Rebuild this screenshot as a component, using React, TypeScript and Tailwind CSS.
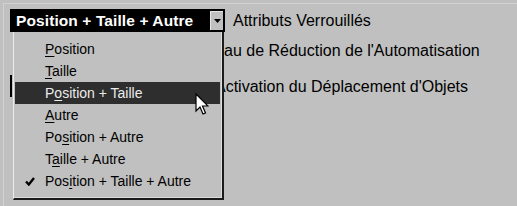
import React from 'react';

type Item = { pre: string; key: string; post: string; checked?: boolean; active?: boolean };

const items: Item[] = [
    { pre: '', key: 'P', post: 'osition' },
    { pre: '', key: 'T', post: 'aille' },
    { pre: 'P', key: 'o', post: 'sition + Taille', active: true },
    { pre: '', key: 'A', post: 'utre' },
    { pre: 'Po', key: 's', post: 'ition + Autre' },
    { pre: 'T', key: 'a', post: 'ille + Autre' },
    { pre: 'Pos', key: 'i', post: 'tion + Taille + Autre', checked: true },
];

function CheckMark() {
    return (
        <svg width="10" height="9" viewBox="0 0 10 9" className="absolute left-[10px] top-[7px]">
            <path d="M1 4.5 L3.8 7.5 L9 1" fill="none" stroke="#000" strokeWidth="2.4" />
        </svg>
    );
}

function Cursor() {
    return (
        <svg width="14" height="23" viewBox="0 0 14 23" className="absolute left-[195px] top-[93px]">
            <path
                d="M1 1 L1 18 L5 14 L8 21 L10.5 20 L7.5 13 L13 13 Z"
                fill="#fff"
                stroke="#000"
                strokeWidth="1.2"
                strokeLinejoin="miter"
            />
        </svg>
    );
}

export default function App() {
    return (
        <div className="relative w-[517px] h-[206px] overflow-hidden bg-[#c0c0c0] pt-[3px] pl-[3px] font-['Liberation_Sans',Arial,sans-serif]">
            <div className="h-full border-t border-l border-[#d2d2d2] pt-[5px] pl-[6px]">
                {/* combo row */}
                <div className="flex items-center h-[23px]">
                    <div className="flex items-center w-[215px] h-[23px] bg-black">
                        <span className="pl-[6px] text-[15.5px] font-bold text-white leading-none tracking-[0.1px]">
                            Position + Taille + Autre
                        </span>
                        <div className="ml-auto mr-[2px] w-[13px] h-[19px] bg-[#c0c0c0] border-t border-l border-[#e6e6e6] flex items-center justify-center">
                            <svg width="7" height="4" viewBox="0 0 7 4">
                                <path d="M0 0 L7 0 L3.5 4 Z" fill="#000" />
                            </svg>
                        </div>
                    </div>
                    <span className="ml-[8px] text-[16px] text-black leading-none">Attributs Verrouillés</span>
                </div>

                <div className="mt-[9px] h-[20px] leading-[20px] pl-[182px] text-[16px] text-black whitespace-nowrap">
                    Niveau de Réduction de l'Automatisation
                </div>

                <div className="mt-[14px] flex items-center h-[22px]">
                    <div className="w-[2px] h-[22px] bg-black" />
                    <span className="ml-[203px] mt-[1px] text-[16px] text-black leading-none whitespace-nowrap">
                        Activation du Déplacement d'Objets
                    </span>
                </div>
            </div>

            {/* open dropdown list */}
            <div className="absolute left-[13px] top-[32px] w-[211px] h-[168px] bg-[#c0c0c0] border-l border-[#ececec] border-r-2 border-b-2 border-r-[#1c1c1c] border-b-[#1c1c1c] shadow-[inset_-1px_-1px_0_#dcdcdc] pt-[6px]">
                {items.map((it, i) => (
                    <div
                        key={i}
                        className={`relative ml-[1px] mr-[2px] h-[22px] flex items-center pl-[30px] text-[14px] whitespace-nowrap ${
                            it.active ? 'bg-[#2e2e2e] text-[#ececec]' : 'text-black'
                        }`}
                    >
                        {it.checked && <CheckMark />}
                        <span>
                            {it.pre}
                            <span className="underline underline-offset-2">{it.key}</span>
                            {it.post}
                        </span>
                    </div>
                ))}
            </div>

            <Cursor />
        </div>
    );
}
